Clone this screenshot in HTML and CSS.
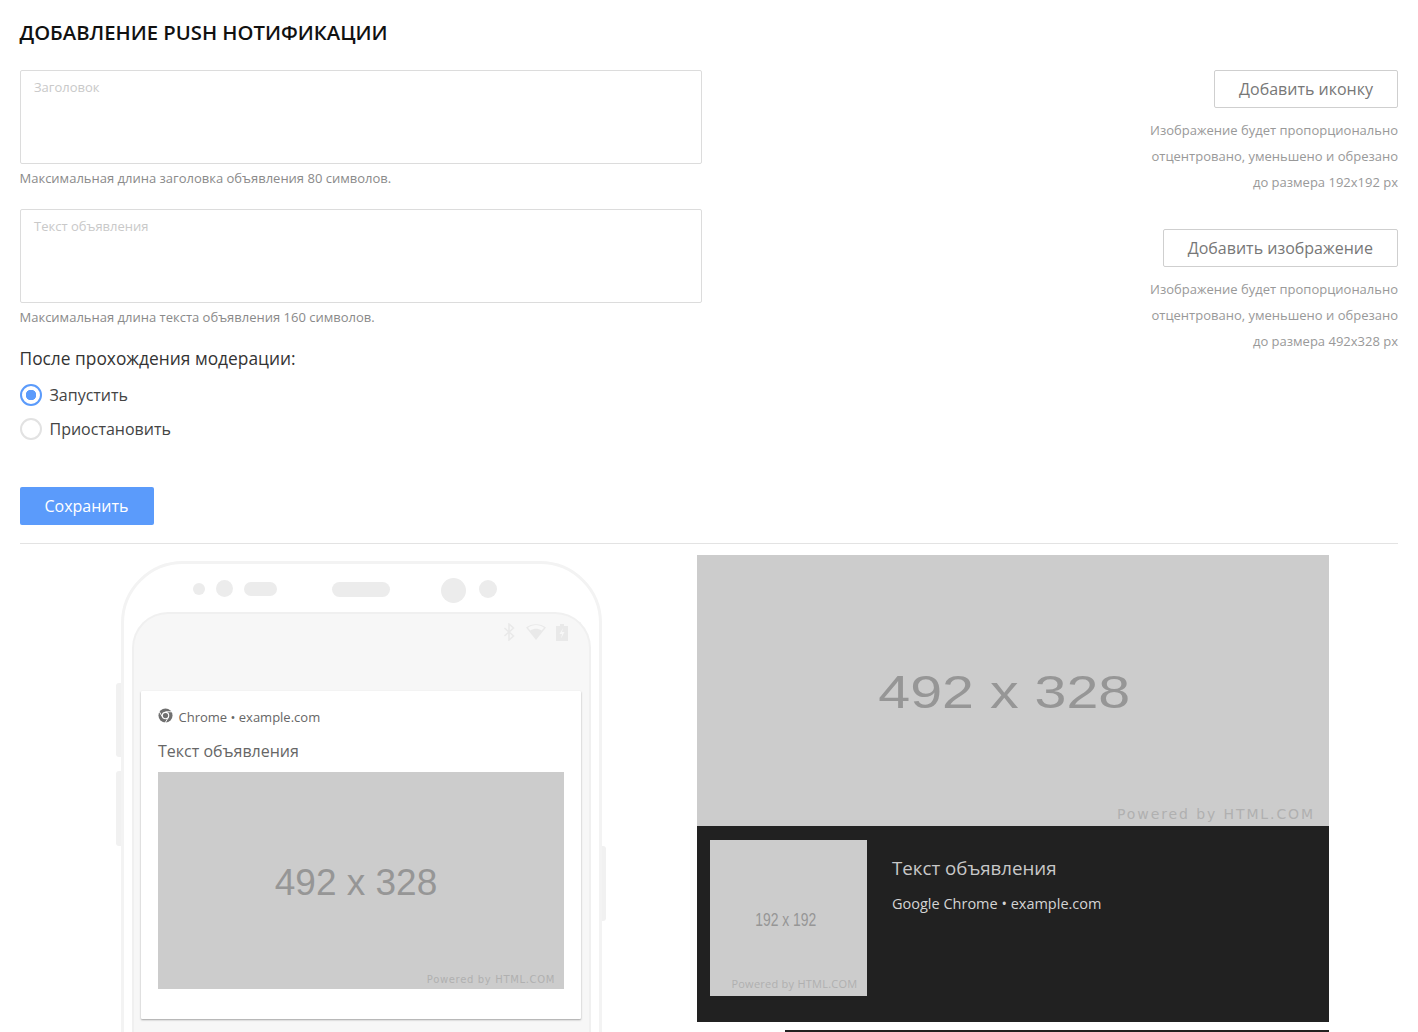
FILE: index.html
```html
<!DOCTYPE html>
<html lang="ru">
<head>
<meta charset="utf-8">
<title>Добавление push нотификации</title>
<link rel="stylesheet" href="styles.css">
</head>
<body>
<main class="page">
  <h1 class="title">ДОБАВЛЕНИЕ PUSH НОТИФИКАЦИИ</h1>
  <section class="form-row">
    <div class="fields">
      <div class="textbox">Заголовок</div>
      <p class="hint">Максимальная длина заголовка объявления 80 символов.</p>
      <div class="textbox textbox-second">Текст объявления</div>
      <p class="hint">Максимальная длина текста объявления 160 символов.</p>
      <p class="moderation">После прохождения модерации:</p>
      <div class="radio-row"><span class="radio radio-on"></span><span>Запустить</span></div>
      <div class="radio-row radio-row-second"><span class="radio"></span><span>Приостановить</span></div>
      <div class="save">Сохранить</div>
    </div>
    <aside class="uploads">
      <div class="upload-btn">Добавить иконку</div>
      <p class="upload-note">Изображение будет пропорционально<br>отцентровано, уменьшено и обрезано<br>до размера 192x192 px</p>
      <div class="upload-btn upload-btn-second">Добавить изображение</div>
      <p class="upload-note">Изображение будет пропорционально<br>отцентровано, уменьшено и обрезано<br>до размера 492x328 px</p>
    </aside>
  </section>
  <hr class="divider">
  <section class="previews">
    <div class="phone">
      <span class="side side-l1"></span>
      <span class="side side-l2"></span>
      <span class="side side-r"></span>
      <div class="phone-top">
        <span class="dot dot-a"></span>
        <span class="dot dot-b"></span>
        <span class="pill pill-a"></span>
        <span class="pill pill-b"></span>
        <span class="dot dot-c"></span>
        <span class="dot dot-d"></span>
      </div>
      <div class="screen">
        <div class="status">
          <svg class="st-bt" viewBox="0 0 12 18" width="12" height="18"><path d="M1.500 5l9 8-4.500 4V1l4.500 4-9 8" fill="none" stroke="#e9e9e9" stroke-width="1.500"/></svg>
          <svg class="st-wifi" viewBox="0 0 20 16" width="20" height="16"><path d="M0 3.500C5.500-1 14.500-1 20 3.500L10 16z" fill="#e9e9e9"/><path d="M2 3.700C7 .2 13 .2 18 3.700l-2.300 2.900C12.300 4.200 7.700 4.200 4.300 6.600z" fill="#f8f8f8"/></svg>
          <svg class="st-bat" viewBox="0 0 12 17" width="12" height="17"><path d="M4 0h4v2h4v15H0V2h4z" fill="#e9e9e9"/><path d="M7 4L3.500 10H6l-1 4.500L8.500 8H6z" fill="#f7f7f7"/></svg>
        </div>
        <article class="notification">
          <div class="n-head">
            <svg class="chrome" viewBox="0 0 16 16" width="15" height="15">
              <circle cx="8" cy="8" r="7.500" fill="#707070"/>
              <circle cx="8" cy="8" r="4" fill="#fff"/>
              <circle cx="8" cy="8" r="2.800" fill="#707070"/>
              <path d="M8 4H15M5 10L1.500 4.200M11 10l-3.500 6" stroke="#fff" stroke-width="1" fill="none"/>
            </svg>
            <span>Chrome • example.com</span>
          </div>
          <div class="n-title">Текст объявления</div>
          <div class="placeholder ph-phone">
            <span class="ph-size">492 x 328</span>
            <span class="ph-powered">Powered by HTML.COM</span>
          </div>
        </article>
      </div>
    </div>
    <div class="desktop">
      <div class="placeholder ph-wide">
        <span class="ph-size">492 x 328</span>
        <span class="ph-powered">Powered by HTML.COM</span>
      </div>
      <div class="dark">
        <div class="placeholder ph-icon">
          <span class="ph-size">192 x 192</span>
          <span class="ph-powered">Powered by HTML.COM</span>
        </div>
        <div class="dark-text">
          <div class="dark-title">Текст объявления</div>
          <div class="dark-sub">Google Chrome • example.com</div>
        </div>
      </div>
      <div class="next-dark"></div>
    </div>
  </section>
</main>
</body>
</html>
```
FILE: styles.css
```css
* { box-sizing: border-box; }
html, body { margin: 0; height: 1032px; overflow: hidden; background: #fff; }
body { font-family: "Open Sans", "Noto Sans", sans-serif; color: #333; }
p { margin: 0; }
.page { padding: 0 20px 0 19.5px; }
.title { margin: 0; padding-top: 19px; height: 70px; font-size: 20.250px; line-height: 27px; font-weight: 600; color: #111; }
.form-row { display: flex; justify-content: space-between; height: 473px; }
.fields { width: 682.5px; }
.textbox { height: 94px; border: 1px solid #dcdcdc; border-radius: 2px; padding: 7px 13.500px; font-size: 13px; line-height: 18px; color: #c9c9c9; }
.textbox-second { margin-top: 22px; }
.hint { margin-top: 5px; font-size: 13px; line-height: 18px; color: #8a8a8a; }
.moderation { margin-top: 20px; font-size: 17.350px; line-height: 24px; color: #333; }
.radio-row { display: flex; align-items: center; gap: 8px; margin-top: 13px; height: 24px; font-size: 16px; color: #444; }
.radio-row-second { margin-top: 10px; }
.radio { width: 22px; height: 22px; border-radius: 50%; border: 2px solid #e2e2e2; background: #fff; flex: none; }
.radio-on { border-color: #5b9bfb; background: radial-gradient(circle, #5b9bfb 0 5px, #fff 5.500px); }
.save { margin-top: 46px; width: 134px; height: 38px; background: #5b9bfb; border-radius: 2px; color: #fff; font-size: 16px; line-height: 38px; text-align: center; }
.uploads { display: flex; flex-direction: column; align-items: flex-end; }
.upload-btn { height: 38px; padding: 0 24px; border: 1px solid #cfcfcf; border-radius: 2px; font-size: 16px; line-height: 36px; color: #777; }
.upload-btn-second { margin-top: 34px; }
.upload-note { margin-top: 9px; font-size: 13px; line-height: 26px; color: #999; text-align: right; }
.divider { margin: 0; border: 0; border-top: 1px solid #e3e3e3; height: 1px; }
.previews { display: flex; margin-top: 11px; }
.phone { position: relative; flex: none; width: 481px; height: 520px; margin: 6px 0 0 101.500px; border: 3px solid #f3f3f3; border-radius: 62px 62px 0 0; padding: 48px 8px 0 8px; }
.side { position: absolute; background: #f1f1f1; width: 5px; }
.side-l1 { left: -8px; top: 119px; height: 74px; border-radius: 3px 0 0 3px; }
.side-l2 { left: -8px; top: 207px; height: 75px; border-radius: 3px 0 0 3px; }
.side-r { right: -7px; top: 282px; height: 75px; width: 4px; border-radius: 0 3px 3px 0; }
.phone-top span { position: absolute; background: #ececec; }
.dot { border-radius: 50%; }
.pill { border-radius: 8px; }
.dot-a { left: 69px; top: 19px; width: 12px; height: 12px; }
.dot-b { left: 91.500px; top: 16px; width: 17px; height: 17px; }
.pill-a { left: 120px; top: 18px; width: 33px; height: 14px; }
.pill-b { left: 208px; top: 18px; width: 58px; height: 15px; }
.dot-c { left: 316.500px; top: 14px; width: 25px; height: 25px; }
.dot-d { left: 355px; top: 16px; width: 18px; height: 18px; }
.screen { height: 470px; background: #f7f7f7; border: 2px solid #f0f0f0; border-bottom: 0; border-radius: 36px 36px 0 0; padding: 0 8px 0 7px; }
.status { display: flex; justify-content: flex-end; align-items: center; gap: 10.500px; height: 77px; padding: 0 13px 41px 0; }
.notification { height: 328px; background: #fff; box-shadow: 0 1px 2px rgba(0, 0, 0, .35); padding: 0 17px; border-radius: 1px; }
.n-head { display: flex; align-items: center; gap: 5.500px; height: 51px; font-size: 13px; color: #666; }
.chrome { flex: none; margin-top: -2px; }
.n-title { height: 30px; font-size: 16px; line-height: 18px; color: #666; }
.placeholder { position: relative; display: flex; align-items: center; justify-content: center; background: #cccccc; overflow: hidden; }
.ph-size { font-family: "Liberation Sans", Arial, sans-serif; color: #969696; white-space: nowrap; }
.ph-powered { position: absolute; font-family: "DejaVu Sans", sans-serif; color: #b0b0b0; white-space: nowrap; }
.ph-phone { width: 406px; height: 217px; }
.ph-phone .ph-size { font-size: 37px; margin: 4px 10px 0 0; }
.ph-phone .ph-powered { right: 9px; bottom: 2px; font-size: 10px; line-height: 14px; letter-spacing: .66px; }
.desktop { flex: none; width: 632px; margin-left: 95px; }
.ph-wide { height: 271px; }
.ph-wide .ph-size { font-size: 47px; line-height: 54px; transform: scaleX(1.22); margin: 2px 18px 0 0; }
.ph-wide .ph-powered { right: 14px; bottom: 3px; font-size: 14px; line-height: 18px; letter-spacing: 1.900px; }
.dark { display: flex; height: 196px; padding: 14px 13px; background: #212121; }
.ph-icon { width: 156.500px; height: 156px; flex: none; }
.ph-icon .ph-size { font-size: 19px; transform: scaleX(.73); margin: 4px 6px 0 0; }
.ph-icon .ph-powered { right: 9px; bottom: 5px; font-family: "Open Sans", sans-serif; font-size: 11px; line-height: 14px; letter-spacing: .25px; }
.dark-text { padding: 15px 0 0 25.500px; }
.dark-title { font-size: 18.700px; line-height: 26px; color: #c8c8c8; }
.dark-sub { margin-top: 13px; font-size: 14.500px; line-height: 20px; color: #d4d4d4; }
.next-dark { margin: 8px 0 0 88px; height: 4px; background: #212121; }
```
